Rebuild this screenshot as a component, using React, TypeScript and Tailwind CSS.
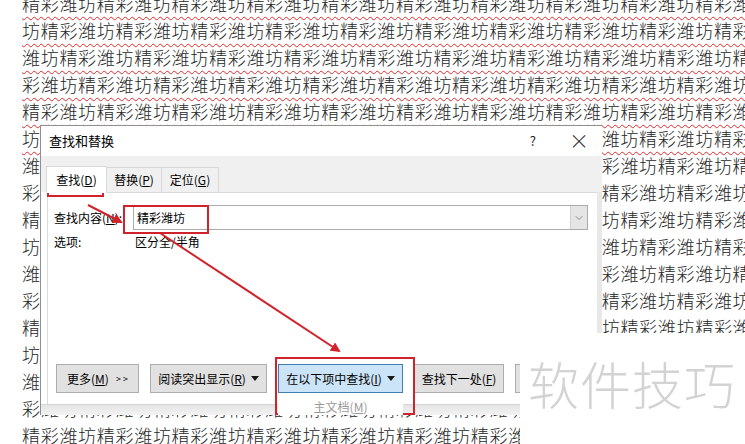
import { ChevronDown } from 'lucide-react';

const WORD = '精彩潍坊';

const rows = Array.from({ length: 17 }, (_, i) => {
  const start = (4 - (i % 4)) % 4;
  let s = '';
  for (let j = 0; j < 44; j++) s += WORD[(start + j) % 4];
  return s;
});

function Btn({ children, blue = false, w }: { children: React.ReactNode; blue?: boolean; w: string }) {
  return (
    <div
      className={`${w} h-[29px] shrink-0 flex items-center justify-center border text-[12px] ${
        blue ? 'bg-[#cce4f7] border-[#3f7db3]' : 'bg-[#e1e1e1] border-[#adadad]'
      }`}
    >
      {children}
    </div>
  );
}

function Caret() {
  return (
    <svg className="ml-[5px]" width="8" height="5" viewBox="0 0 8 5">
      <path d="M0,0 L8,0 L4,5 z" fill="#1a1a1a" />
    </svg>
  );
}

export default function App() {
  return (
    <div className="relative w-[745px] h-[444px] overflow-hidden bg-white font-['Noto_Sans_CJK_SC',sans-serif] text-black">
      {/* document text */}
      <div className="-mt-[10px] font-light text-[18px] tracking-[0.7px] text-[#262626]">
        {rows.map((r, i) => (
          <div key={i} className="h-[27px] leading-[27px] whitespace-nowrap pl-[22px]">
            <span
              className={
                i <= 5
                  ? 'underline decoration-wavy decoration-[#e0282c] decoration-1 underline-offset-[5px]'
                  : ''
              }
            >
              {r}
            </span>
          </div>
        ))}
      </div>

      {/* find & replace dialog */}
      <div className="absolute left-[40px] top-[125px] w-[562px] h-[290px] flex flex-col bg-white border-l border-t border-[#8f8f8f]">
        {/* title bar */}
        <div className="h-[30px] flex items-center pl-[8px] pr-[13px] text-[13px]">
          <span>查找和替换</span>
          <span className="ml-auto text-[13px] text-[#222]">?</span>
          <span className="ml-[33px] text-[20px] font-light leading-none text-[#222]">×</span>
        </div>

        {/* tabs */}
        <div className="h-[36px] bg-[#f0f0f0] flex items-end pl-[5px] text-[12px]">
          <div className="relative z-10 w-[61px] h-[27px] -mb-px bg-white border border-b-0 border-[#d9d9d9] flex items-center justify-center">
            查找(<span className="underline">D</span>)
          </div>
          <div className="w-[55px] h-[25px] border border-l-0 border-b-0 border-[#d9d9d9] flex items-center justify-center">
            替换(<span className="underline">P</span>)
          </div>
          <div className="w-[57px] h-[25px] border border-l-0 border-b-0 border-[#d9d9d9] flex items-center justify-center">
            定位(<span className="underline">G</span>)
          </div>
        </div>

        {/* panel */}
        <div className="flex flex-1 pl-[6px]">
          <div className="flex-1 flex flex-col border-t border-l border-[#d9d9d9] pl-[6px] pb-[11px] text-[12px]">
            <div className="mt-[12px] flex items-center h-[25px]">
              <span className="w-[79px]">
                查找内容(<span className="underline">N</span>):
              </span>
              <div className="w-[455px] h-[25px] flex border border-[#ababab]">
                <span className="flex-1 pl-[3px] leading-[23px]">精彩潍坊</span>
                <div className="w-[17px] bg-[#e5e5e5] border-l border-[#d0d0d0] flex items-center justify-center">
                  <ChevronDown size={12} strokeWidth={1.3} color="#555" />
                </div>
              </div>
            </div>
            <div className="mt-[4px] flex h-[16px] items-center">
              <span className="w-[81px]">选项:</span>
              <span>区分全/半角</span>
            </div>

            <div className="mt-auto flex gap-[11px] pl-[2px]">
              <Btn w="w-[83px]">
                更多(<span className="underline">M</span>)<span className="ml-[7px] text-[9px]">&gt; &gt;</span>
              </Btn>
              <Btn w="w-[117px]">
                阅读突出显示(<span className="underline">R</span>)
                <Caret />
              </Btn>
              <div className="relative">
                <Btn w="w-[125px]" blue>
                  在以下项中查找(<span className="underline">I</span>)
                  <Caret />
                </Btn>
                <div className="absolute left-0 top-full w-[125px] h-[22px] pt-[5px] bg-white flex items-center justify-center text-[12px] text-[#9a9a9a] z-10">
                  主文档(<span className="underline">M</span>)
                </div>
              </div>
              <Btn w="w-[90px]">
                查找下一处(<span className="underline">F</span>)
              </Btn>
              <Btn w="w-[80px]">取消</Btn>
            </div>
          </div>
          <div className="w-[5px] bg-[#e8e8e8]" />
        </div>
        <div className="h-[11px] bg-gradient-to-b from-[#e4e4e4] to-[#f3f3f3] border-t border-[#d4d4d4]" />
      </div>

      {/* red annotation boxes */}
      <div className="absolute left-[47px] top-[168px] w-[57px] h-[29px] border-2 border-[#d1232b]" />
      <div className="absolute left-[123px] top-[205px] w-[86px] h-[29px] border-2 border-[#d1232b]" />
      <div className="absolute left-[275px] top-[357px] w-[140px] h-[58px] border-2 border-[#d1232b]" />

      {/* arrows */}
      <svg className="absolute inset-0 pointer-events-none" width={745} height={444}>
        <defs>
          <marker id="ah" viewBox="0 0 10 10" refX="8" refY="5" markerWidth="5" markerHeight="5" orient="auto">
            <path d="M0,0 L10,5 L0,10 z" fill="#d1232b" />
          </marker>
        </defs>
        <line x1={88} y1={205} x2={121} y2={222} stroke="#d1232b" strokeWidth={2} markerEnd="url(#ah)" />
        <line x1={160} y1={233} x2={339} y2={351} stroke="#d1232b" strokeWidth={2} markerEnd="url(#ah)" />
      </svg>

      {/* watermark */}
      <div className="absolute left-[520px] top-[333px] right-0 bottom-0 bg-white flex items-center pl-[8px] pb-[10px]">
        <span className="text-[51px] font-light tracking-[1px] text-[#d3d3d3] leading-none">软件技巧</span>
      </div>
    </div>
  );
}
